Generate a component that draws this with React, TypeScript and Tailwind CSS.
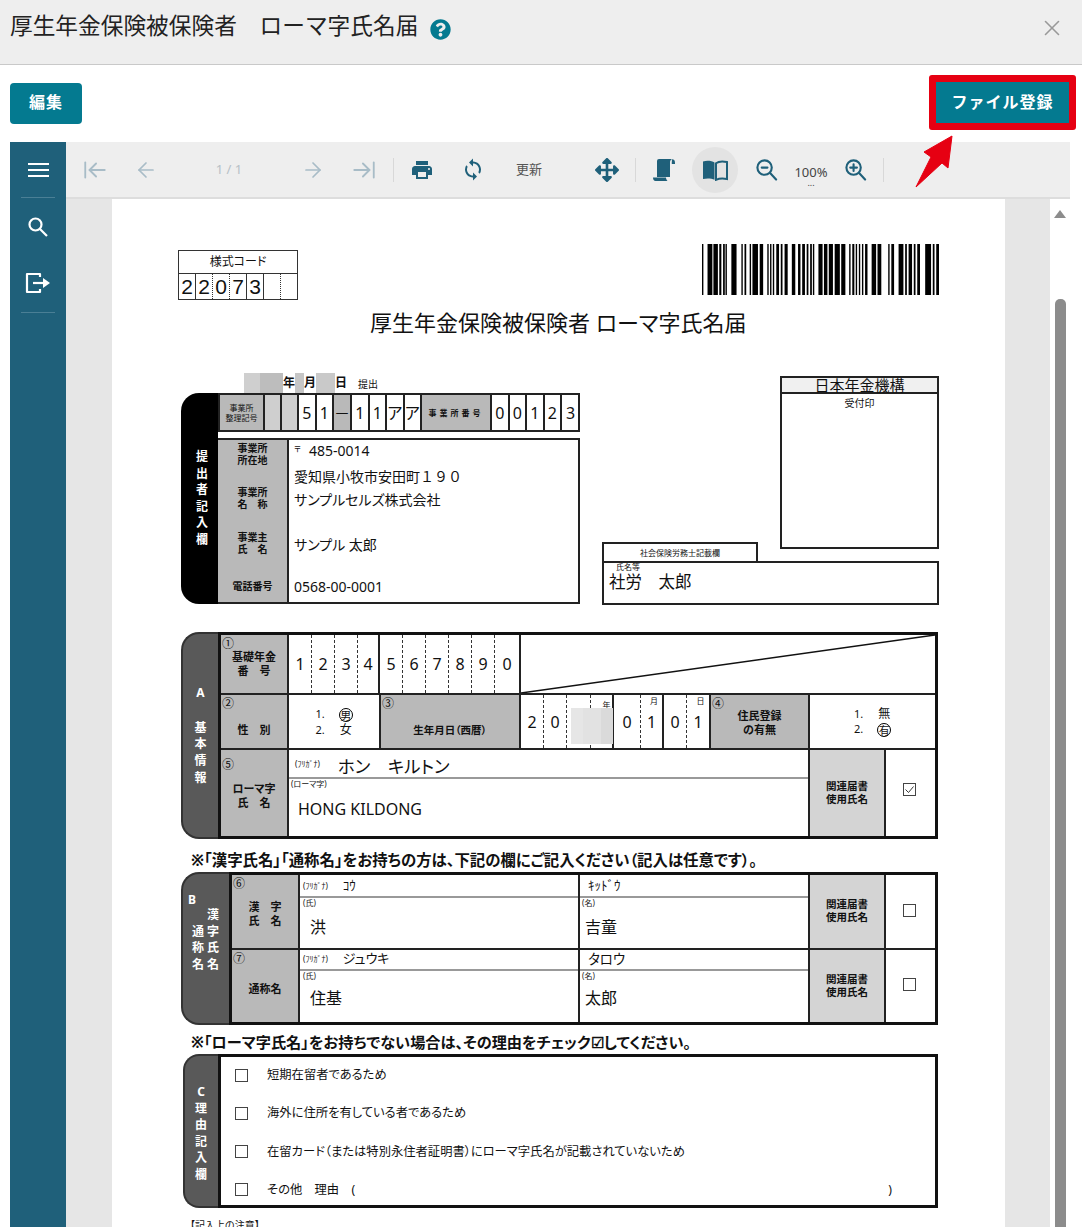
import { ReactNode } from 'react';
import { ArrowLeft, ArrowLeftToLine, ArrowRight, ArrowRightToLine, X } from 'lucide-react';
import { FaArrowsAlt, FaQuestionCircle } from 'react-icons/fa';
import { MdPrint, MdSync } from 'react-icons/md';

const BARS = [
  [467, 471], [483, 497], [500, 513], [517, 523], [528, 533], [535, 539], [552, 567], [581, 585], [590, 595],
  [605, 609], [613, 629], [634, 644], [656, 660], [664, 668], [672, 676], [682, 690], [695, 700], [706, 715],
  [727, 737], [745, 752], [757, 765], [770, 775], [780, 785], [788, 792], [804, 816], [820, 830], [834, 846],
  [851, 866], [870, 882], [893, 897], [902, 908], [912, 916], [921, 925], [930, 934], [939, 946], [958, 971],
  [975, 986], [1006, 1010], [1015, 1023], [1036, 1050], [1055, 1060], [1065, 1075], [1080, 1085], [1090, 1098],
  [1113, 1130], [1135, 1140], [1145, 1153],
];

function Barcode() {
  return (
    <svg width="237" height="51" viewBox="467 0 686 51" preserveAspectRatio="none">
      {BARS.map(([a, b]) => (
        <rect key={a} x={a} y="0" width={b - a} height="51" fill="#000" />
      ))}
    </svg>
  );
}

function Tool({ children, className = '' }: { children: ReactNode; className?: string }) {
  return <div className={`flex shrink-0 items-center justify-center ${className}`}>{children}</div>;
}

function Toolbar() {
  return (
    <div className="flex h-[57px] shrink-0 items-center border-b-2 border-[#dddddd] bg-[#eeeeee] pl-[16px] text-[#1f607a]">
      <Tool className="w-[26px] text-[#a8bcc7]"><ArrowLeftToLine size={26} strokeWidth={1.7} /></Tool>
      <Tool className="ml-[26px] w-[24px] text-[#a8bcc7]"><ArrowLeft size={24} strokeWidth={1.7} /></Tool>
      <Tool className="ml-[56px] w-[30px] text-[13px] text-[#b6c0c6]">1 / 1</Tool>
      <Tool className="ml-[57px] w-[24px] text-[#a8bcc7]"><ArrowRight size={24} strokeWidth={1.7} /></Tool>
      <Tool className="ml-[26px] w-[26px] text-[#a8bcc7]"><ArrowRightToLine size={26} strokeWidth={1.7} /></Tool>
      <div className="ml-[16px] h-[24px] w-px bg-[#d8d8d8]" />
      <Tool className="ml-[16px] w-[24px]"><MdPrint size={28} /></Tool>
      <Tool className="ml-[27px] w-[24px]"><MdSync size={27} /></Tool>
      <Tool className="ml-[29px] w-[30px] text-[13px] text-[#555555]">更新</Tool>
      <Tool className="ml-[51px] w-[24px]"><FaArrowsAlt size={24} /></Tool>
      <div className="ml-[16px] h-[24px] w-px bg-[#d8d8d8]" />
      <Tool className="ml-[15px] w-[26px]">
        <svg width="24" height="24" viewBox="0 0 24 24" fill="#1f607a">
          <path d="M7 1h13c-1.500 1-2 2-2 3.500V19H5V3a2 2 0 0 1 2-2z" />
          <path d="M20 1.200c1.800 0 3 1.200 3 3.300v1.500h-3.200V4.500z" />
          <path d="M1 19.500h13c0 1.200.5 2.500 1.500 3.500H3.500C2 23 1 21.500 1 19.500z" />
        </svg>
      </Tool>
      <Tool className="ml-[15px] h-[46px] w-[46px] rounded-full bg-[#e3e3e3]">
        <svg width="26" height="22" viewBox="0 0 26 22">
          <path d="M12.500 3.500C10 1.800 5 1.400 1 2.400V20c4-.9 8.500-.7 11.500.8z" fill="#1f607a" />
          <path d="M14 4.200C16.200 2.600 21 2.200 25 3v17c-3.800-.8-8-.6-11 .8z" fill="none" stroke="#1f607a" strokeWidth="2" />
        </svg>
      </Tool>
      <Tool className="ml-[16px] w-[24px]">
        <svg width="23" height="23" viewBox="0 0 24 24" fill="none" stroke="#1f607a" strokeWidth="2.200" strokeLinecap="round">
          <circle cx="10" cy="10" r="7.500" />
          <path d="M16 16l6 6.500M7 10h6" />
        </svg>
      </Tool>
      <div className="ml-[13px] flex w-[40px] shrink-0 flex-col items-center text-[13px] leading-[16px] text-[#444444]">
        <span className="mt-[13px]">100%</span>
        <span className="h-[9px] text-[9px] leading-[6px]">...</span>
      </div>
      <Tool className="ml-[12px] w-[24px]">
        <svg width="23" height="23" viewBox="0 0 24 24" fill="none" stroke="#1f607a" strokeWidth="2.200" strokeLinecap="round">
          <circle cx="10" cy="10" r="7.500" />
          <path d="M16 16l6 6.500M6.500 10h7M10 6.500v7" />
        </svg>
      </Tool>
      <div className="ml-[16px] h-[24px] w-px bg-[#d8d8d8]" />
    </div>
  );
}

function Sidebar() {
  return (
    <div className="flex w-[56px] shrink-0 flex-col items-center bg-[#1f607a] text-white">
      <div className="mt-[21px] flex h-[14px] w-[21px] flex-col justify-between">
        <div className="h-[2px] bg-white" />
        <div className="h-[2px] bg-white" />
        <div className="h-[2px] bg-white" />
      </div>
      <div className="mt-[20px] h-px w-[34px] bg-[#4a7f95]" />
      <svg className="mt-[18px]" width="22" height="22" viewBox="0 0 22 22" fill="none" stroke="#fff" strokeWidth="2.200">
        <circle cx="8.500" cy="8.500" r="6" />
        <path d="M13 13l7 7" />
      </svg>
      <svg className="mt-[34px]" width="26" height="22" viewBox="0 0 26 22" fill="none" stroke="#fff" strokeWidth="2.200">
        <path d="M15 5V2H2v18h13v-3" strokeLinejoin="round" />
        <path d="M8 11h11" />
        <path d="M18 6l7 5-7 5z" fill="#fff" stroke="none" />
      </svg>
      <div className="mt-[18px] h-px w-[34px] bg-[#4a7f95]" />
    </div>
  );
}

function Cell({ w, children, edge = 'solid', bg = '' }: { w: number; children?: ReactNode; edge?: 'solid' | 'dash' | 'none'; bg?: string }) {
  const border =
    edge === 'solid' ? 'border-r-2 border-[#222222]' : edge === 'dash' ? 'border-r border-dashed border-[#333333]' : '';
  return (
    <div className={`flex h-full shrink-0 items-center justify-center ${border} ${bg}`} style={{ width: w }}>
      {children}
    </div>
  );
}

function StackText({ chars, className = '' }: { chars: string; className?: string }) {
  return (
    <div className={`flex flex-col items-center ${className}`}>
      {chars.split('').map((c, i) => (
        <span key={i}>{c}</span>
      ))}
    </div>
  );
}

function Label({ no, noLow, w = 68, children, bg = 'bg-[#b9b9b9]' }: { no?: string; noLow?: boolean; w?: number; children?: ReactNode; bg?: string }) {
  return (
    <div className={`relative flex h-full shrink-0 flex-col items-center justify-center border-r-2 border-[#222222] text-center text-[11px] font-bold leading-[14px] ${bg}`} style={{ width: w }}>
      {no && <span className={`absolute left-[1px] text-[12px] font-normal leading-[14px] ${noLow ? 'top-[8px]' : 'top-[2px]'}`}>{no}</span>}
      {children}
    </div>
  );
}

function Circled({ children }: { children: ReactNode }) {
  return (
    <span className="ml-[3px] inline-flex h-[14px] w-[14px] items-center justify-center rounded-full border border-black align-middle text-[11px] leading-none">
      {children}
    </span>
  );
}

function TinyNote({ children }: { children: ReactNode }) {
  return <div className="text-[8px] leading-[10px] text-[#222222]">{children}</div>;
}

function CheckBox({ checked = false }: { checked?: boolean }) {
  return (
    <div className="flex h-[13px] w-[13px] shrink-0 items-center justify-center border border-[#444444]">
      {checked && (
        <svg width="11" height="11" viewBox="0 0 11 11" fill="none" stroke="#222" strokeWidth="0.900">
          <path d="M1.500 5.500l3 3 5-6" />
        </svg>
      )}
    </div>
  );
}

function Relation({ children }: { children?: ReactNode }) {
  return (
    <>
      <Label w={76} bg="bg-[#d4d4d4]">
        <span className="text-[10.500px] leading-[13px]">関連届書<br />使用氏名</span>
      </Label>
      <div className="flex flex-1 items-center justify-center pb-[2px] pr-[2px]">{children}</div>
    </>
  );
}

function Submitter() {
  const top = ['5', '1'];
  return (
    <div className="ml-[69px] mt-[34px] flex">
      <div className="w-[399px]">
        <div className="flex h-[21px] items-center text-[12px] font-bold">
          <div className="ml-[63px] h-[20px] w-[16px] bg-[#cfcfcf]" />
          <div className="h-[20px] w-[23px] bg-[#bdbdbd]" />
          <span className="leading-[20px]">年</span>
          <div className="h-[20px] w-[9px] bg-[#c6c6c6]" />
          <span className="leading-[20px]">月</span>
          <div className="h-[20px] w-[19px] bg-[#c9c9c9]" />
          <span className="leading-[20px]">日</span>
          <span className="ml-[11px] mt-[3px] text-[10px] font-normal">提出</span>
        </div>
        <div className="flex h-[211px]">
          <div className="flex w-[37px] shrink-0 flex-col items-center rounded-l-[18px] bg-black pl-[5px] pt-[56px] text-[12px] font-bold leading-[16.500px] text-white">
            <StackText chars="提出者記入欄" />
          </div>
          <div className="flex w-[362px] flex-col">
            <div className="flex h-[39px] border-2 border-[#222222] text-[16px]">
              <Cell w={45} bg="bg-[#b9b9b9]">
                <span className="text-center text-[8px] leading-[10px]">事業所<br />整理記号</span>
              </Cell>
              <Cell w={17} bg="bg-[#cfcfcf]" />
              <Cell w={17} bg="bg-[#cfcfcf]" />
              {top.map((d, i) => <Cell key={i} w={17.500}>{d}</Cell>)}
              <Cell w={18} bg="bg-[#b9b9b9]">－</Cell>
              <Cell w={17.500}>1</Cell>
              <Cell w={17.500}>1</Cell>
              <Cell w={17.500}>ア</Cell>
              <Cell w={17.500}>ア</Cell>
              <Cell w={70} bg="bg-[#b9b9b9]">
                <span className="text-[8px] font-bold tracking-[3px]">事業所番号</span>
              </Cell>
              <Cell w={17.500}>0</Cell>
              <Cell w={17.500}>0</Cell>
              <Cell w={17.500}>1</Cell>
              <Cell w={17.500}>2</Cell>
              <Cell w={17} edge="none">3</Cell>
            </div>
            <div className="mt-[6px] flex h-[166px] border-2 border-l-0 border-[#222222]">
              <div className="flex w-[71px] shrink-0 flex-col items-center border-r-2 border-[#222222] bg-[#b9b9b9] text-center text-[10px] font-bold leading-[11.500px]">
                <span className="mt-[3px]">事業所<br />所在地</span>
                <span className="mt-[21px]">事業所<br />名　称</span>
                <span className="mt-[22px]">事業主<br />氏　名</span>
                <span className="mt-[26px]">電話番号</span>
              </div>
              <div className="mt-[1px] pl-[5px] text-[14px] leading-[20px] text-[#111111]">
                <div><sup className="mr-[8px] text-[8px]">〒</sup>485-0014</div>
                <div className="mt-[6px]">愛知県小牧市安田町<span className="[font-feature-settings:normal]">１９０</span></div>
                <div className="mt-[3px]">サンプルセルズ株式会社</div>
                <div className="mt-[25px]">サンプル 太郎</div>
                <div className="mt-[22px]">0568-00-0001</div>
              </div>
            </div>
          </div>
        </div>
      </div>
      <div className="ml-[22px] w-[337px]">
        <div className="flex h-[189px] items-start">
          <div className="mt-[170px] flex h-[20px] w-[156px] items-center justify-center border-2 border-b-0 border-[#222222] text-[8px]">
            社会保険労務士記載欄
          </div>
          <div className="ml-[22px] mt-[4px] flex h-[173px] w-[159px] flex-col border-2 border-[#222222]">
            <div className="flex h-[16px] items-center justify-center border-b-2 border-[#222222] bg-[#f0f0f0] text-[15px] leading-[16px]">
              日本年金機構
            </div>
            <div className="mt-[2px] text-center text-[10px] leading-[14px]">受付印</div>
          </div>
        </div>
        <div className="h-[44px] border-2 border-[#222222]">
          <div className="ml-[12px] text-[8px] leading-[8px]">氏名等</div>
          <div className="ml-[5px] text-[16.500px] leading-[22px]">社労　太郎</div>
        </div>
      </div>
    </div>
  );
}

function SectionA() {
  const g1 = ['1', '2', '3', '4'];
  const g2 = ['5', '6', '7', '8', '9', '0'];
  return (
    <div className="ml-[69px] mt-[27px] flex h-[207px] w-[757px]">
      <div className="flex w-[37px] shrink-0 flex-col items-center rounded-l-[18px] border-2 border-r-0 border-[#333333] bg-[#595959] text-[12px] font-bold leading-[16.700px] text-white">
        <span className="mt-[51px]">A</span>
        <StackText chars="基本情報" className="mt-[18px]" />
      </div>
      <div className="flex flex-1 flex-col border-[3px] border-[#111111] text-[16px]">
        <div className="flex h-[60px] border-b-2 border-[#222222]">
          <Label no="①">基礎年金<br />番　号</Label>
          {g1.map((d, i) => <Cell key={d} w={i === 3 ? 22 : 23} edge={i === 3 ? 'solid' : 'dash'}>{d}</Cell>)}
          {g2.map((d, i) => <Cell key={d} w={i === 5 ? 26 : 23} edge={i === 5 ? 'solid' : 'dash'}>{d}</Cell>)}
          <div className="flex-1">
            <svg className="h-full w-full" viewBox="0 0 100 100" preserveAspectRatio="none">
              <line x1="0" y1="100" x2="100" y2="0" stroke="#111" strokeWidth="1.500" vectorEffect="non-scaling-stroke" />
            </svg>
          </div>
        </div>
        <div className="flex h-[55px] border-b-2 border-[#222222]">
          <Label no="②"><span className="mt-[16px]">性　別</span></Label>
          <Cell w={92}>
            <div className="text-[11px] leading-[15px]">
              <div>1.　<Circled>男</Circled></div>
              <div>2.　<span className="ml-[4px] text-[12px]">女</span></div>
            </div>
          </Cell>
          <Label no="③" w={140}><span className="mt-[16px] text-[10.500px]">生年月日（西暦）</span></Label>
          <div className="relative flex h-full">
            <Cell w={23} edge="dash">2</Cell>
            <Cell w={23} edge="dash">0</Cell>
            <Cell w={24} edge="dash" />
            <Cell w={23}><span className="mb-[34px] ml-[10px] text-[8px]">年</span></Cell>
            <Cell w={27} edge="dash">0</Cell>
            <Cell w={23}><span className="relative">1<span className="absolute -top-[15px] left-[3px] text-[8px]">月</span></span></Cell>
            <Cell w={23} edge="dash">0</Cell>
            <Cell w={24}><span className="relative">1<span className="absolute -top-[15px] left-[3px] text-[8px]">日</span></span></Cell>
            <div className="absolute left-[50px] top-[13px] flex h-[36px] w-[42px]">
              <div className="w-[12px] bg-[#e6e6e6]" />
              <div className="w-[18px] bg-[#e2e2e2]" />
              <div className="w-[12px] bg-[#dadada]" />
            </div>
          </div>
          <Label no="④" w={99}><span className="mt-[2px]">住民登録<br />の有無</span></Label>
          <div className="flex flex-1 items-center justify-center text-[11px] leading-[15px]">
            <div>
              <div>1.　<span className="ml-[4px] text-[12px]">無</span></div>
              <div>2.　<Circled>有</Circled></div>
            </div>
          </div>
        </div>
        <div className="flex flex-1">
          <Label no="⑤" noLow><span className="mt-[6px]">ローマ字<br />氏　名</span></Label>
          <div className="flex w-[521px] shrink-0 flex-col border-r-2 border-[#222222]">
            <div className="flex h-[29px] items-center border-b-2 border-[#999999] pl-[6px]">
              <span className="text-[8px]">(ﾌﾘｶﾞﾅ)</span>
              <span className="ml-[18px] mt-[6px] text-[17.500px]">ホン　キルトン</span>
            </div>
            <div className="pl-[2px] text-[8px] leading-[10px]">(ローマ字)</div>
            <div className="ml-[9px] mt-[9px] text-[16px] leading-[22px]">HONG KILDONG</div>
          </div>
          <Relation><div className="mb-[6px]"><CheckBox checked /></div></Relation>
        </div>
      </div>
    </div>
  );
}

function NameRow({ no, label, kanaLeft, kanaRight, left, right, last }: { no: string; label: ReactNode; kanaLeft: ReactNode; kanaRight: ReactNode; left: string; right: string; last?: boolean }) {
  const kanaHeight = last ? 'h-[21px]' : 'h-[23px]';
  const nameTop = last ? 'mt-[6px]' : 'mt-[8px]';
  return (
    <div className={`flex flex-1 ${last ? '' : 'border-b-2 border-[#222222]'}`}>
      <Label no={no} w={68}>{label}</Label>
      <div className="flex w-[280px] shrink-0 flex-col border-r-2 border-[#222222]">
        <div className={`flex items-center border-b-2 border-[#999999] pl-[3px] ${kanaHeight}`}>
          <span className="text-[8px]">(ﾌﾘｶﾞﾅ)</span>
          <span className="ml-[15px] flex items-center">{kanaLeft}</span>
        </div>
        <TinyNote><span className="ml-[3px]">(氏)</span></TinyNote>
        <div className={`ml-[10px] text-[16px] leading-[22px] ${nameTop}`}>{left}</div>
      </div>
      <div className="flex w-[230px] shrink-0 flex-col border-r-2 border-[#222222]">
        <div className={`flex items-center border-b-2 border-[#999999] pl-[8px] ${kanaHeight}`}>{kanaRight}</div>
        <TinyNote><span className="ml-[2px]">(名)</span></TinyNote>
        <div className={`ml-[5px] text-[16px] leading-[22px] ${nameTop}`}>{right}</div>
      </div>
      <Relation><CheckBox /></Relation>
    </div>
  );
}

function SectionB() {
  return (
    <div className="ml-[69px] flex h-[153px] w-[757px]">
      <div className="w-[48px] shrink-0 rounded-l-[18px] border-2 border-r-0 border-[#333333] bg-[#595959] pl-[9px] pt-[18px] text-[12px] font-bold leading-[16.700px] text-white">
        <div className="-ml-[4px] leading-[15px]">B</div>
        <div className="flex gap-[3px]">
          <StackText chars="通称名" className="mt-[16.700px]" />
          <StackText chars="漢字氏名" />
        </div>
      </div>
      <div className="flex flex-1 flex-col border-[3px] border-[#111111]">
        <NameRow
          no="⑥"
          label={<span className="mt-[6px]">漢　字<br />氏　名</span>}
          kanaLeft={<span className="text-[13px]">ｺｳ</span>}
          kanaRight={<span className="text-[13px]">ｷｯﾄﾞｳ</span>}
          left="洪"
          right="吉童"
        />
        <NameRow
          no="⑦"
          label={<span className="mt-[6px]">通称名</span>}
          kanaLeft={<span className="text-[13px]">ジュウキ</span>}
          kanaRight={<span className="text-[13.500px]">タロウ</span>}
          left="住基"
          right="太郎"
          last
        />
      </div>
    </div>
  );
}

const REASONS = ['短期在留者であるため', '海外に住所を有している者であるため', '在留カード（または特別永住者証明書）にローマ字氏名が記載されていないため'];

function SectionC() {
  return (
    <div className="ml-[71px] flex h-[154px] w-[755px]">
      <div className="flex w-[35px] shrink-0 flex-col items-center rounded-l-[16px] border-2 border-r-0 border-[#333333] bg-[#595959] pr-[1px] text-[12px] font-bold leading-[16.500px] text-white">
        <span className="mt-[28px]">C</span>
        <StackText chars="理由記入欄" />
      </div>
      <div className="flex flex-1 flex-col justify-between border-[3px] border-[#111111] pb-[5px] pl-[14px] pt-[8px] text-[12.300px] leading-[20px]">
        {REASONS.map((r) => (
          <div key={r} className="flex items-center">
            <CheckBox />
            <span className="ml-[19px]">{r}</span>
          </div>
        ))}
        <div className="flex items-center">
          <CheckBox />
          <span className="ml-[19px]">その他　理由　(</span>
          <span className="ml-[533px]">)</span>
        </div>
      </div>
    </div>
  );
}

function FormPage() {
  return (
    <div className="h-[1100px] w-[893px] shrink-0 bg-white pt-[45px] text-[#111111] [font-feature-settings:'palt']">
      <div className="flex items-start justify-between pl-[66px] pr-[66px]">
        <div className="mt-[6px] flex h-[50px] w-[120px] flex-col border border-[#333333]">
          <div className="flex h-[23px] items-center justify-center border-b border-[#333333] text-[12px]">様式コード</div>
          <div className="flex flex-1 text-[21px] leading-none [font-family:'Liberation_Sans']">
            <div className="flex w-[17px] items-center justify-center border-r border-[#333333]">2</div>
            <div className="flex w-[17px] items-center justify-center border-r border-dotted border-[#333333]">2</div>
            <div className="flex w-[17px] items-center justify-center border-r border-dotted border-[#333333]">0</div>
            <div className="flex w-[17px] items-center justify-center border-r border-[#333333]">7</div>
            <div className="flex w-[17px] items-center justify-center border-r border-[#333333]">3</div>
            <div className="w-[17px] border-r border-dotted border-[#333333]" />
          </div>
        </div>
        <Barcode />
      </div>
      <div className="mt-[6px] pl-[258px] text-[22px] leading-[32px]">厚生年金保険被保険者 ローマ字氏名届</div>
      <Submitter />
      <SectionA />
      <div className="ml-[79px] mt-[10px] h-[23px] text-[15.400px] font-bold leading-[24px]">
        ※「漢字氏名」「通称名」をお持ちの方は、下記の欄にご記入ください（記入は任意です）。
      </div>
      <SectionB />
      <div className="ml-[79px] mt-[6px] h-[23px] text-[15.200px] font-bold leading-[22px]">
        ※「ローマ字氏名」をお持ちでない場合は、その理由をチェック☑してください。
      </div>
      <SectionC />
      <div className="ml-[78px] mt-[10px] text-[10px]">【記入上の注意】</div>
    </div>
  );
}

export default function App() {
  return (
    <div className="relative h-[1227px] w-[1082px] overflow-hidden bg-white font-['Noto_Sans','Noto_Sans_CJK_JP',sans-serif] text-[#222222]">
      <header className="flex h-[65px] items-start justify-between border-b border-[#c9c9c9] bg-[#eeeeee] pl-[10px] pr-[17px]">
        <div className="flex h-[52px] items-center">
          <h1 className="text-[22.700px] font-normal">厚生年金保険被保険者　ローマ字氏名届</h1>
          <span className="ml-[12px] mt-[6px] text-[#047a90]"><FaQuestionCircle size={21} /></span>
        </div>
        <X className="mt-[15px] text-[#999999]" size={26} strokeWidth={1.5} />
      </header>

      <div className="flex h-[77px] items-start justify-between pl-[10px] pr-[6px] pt-[10px]">
        <button className="mt-[8px] h-[41px] w-[72px] rounded-[4px] bg-[#047a90] pb-[3px] text-[16px] font-bold tracking-[1px] text-white">編集</button>
        <div className="rounded-[3px] border-[7px] border-[#e60012]">
          <button className="h-[41px] w-[133px] bg-[#047a90] pb-[2px] text-[16px] font-bold tracking-[1px] text-white">ファイル登録</button>
        </div>
      </div>

      <svg className="absolute left-[910px] top-[130px]" width="50" height="62" viewBox="0 0 50 62">
        <path d="M42 6L14 22l7 5L6 57l26-24 6 5z" fill="#e60012" stroke="#e60012" strokeLinejoin="round" />
      </svg>

      <div className="ml-[10px] flex h-[1085px] w-[1060px]">
        <Sidebar />
        <div className="flex w-[1004px] flex-col">
          <Toolbar />
          <div className="flex flex-1 overflow-hidden">
            <div className="flex flex-1 overflow-hidden bg-[#e6e6e6] pl-[46px]">
              <FormPage />
            </div>
            <div className="flex w-[20px] shrink-0 flex-col items-center bg-white">
              <div className="mt-[11px] h-0 w-0 border-x-[6px] border-b-[8px] border-x-transparent border-b-[#8c8c8c]" />
              <div className="mt-[81px] h-[1000px] w-[11px] rounded-t-[5px] bg-[#8c8c8c]" />
            </div>
          </div>
        </div>
      </div>
    </div>
  );
}
